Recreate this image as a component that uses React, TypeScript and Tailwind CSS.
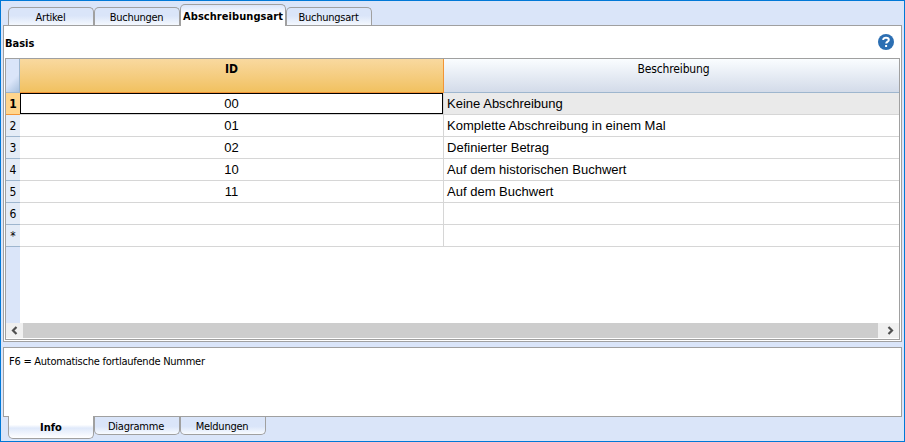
const tahoma = "font-['DejaVu_Sans_Condensed','DejaVu_Sans',sans-serif] [font-stretch:condensed]";
const arial = "font-['Liberation_Sans',sans-serif]";

const rows = [
  { n: '1', id: '00', text: 'Keine Abschreibung' },
  { n: '2', id: '01', text: 'Komplette Abschreibung in einem Mal' },
  { n: '3', id: '02', text: 'Definierter Betrag' },
  { n: '4', id: '10', text: 'Auf dem historischen Buchwert' },
  { n: '5', id: '11', text: 'Auf dem Buchwert' },
  { n: '6', id: '', text: '' },
  { n: '*', id: '', text: '' },
];

function TopTab({ label }: { label: string }) {
  return (
    <div className="flex h-[18px] w-[86px] items-center justify-center rounded-t-[5px] border border-b-0 border-[#a0a0a0] bg-linear-to-b from-[#dae5f9] from-45% to-[#f4f8fe] pt-px pr-px text-[11px] leading-none whitespace-nowrap">
      <span className="tracking-[-0.25px]">{label}</span>
    </div>
  );
}

function BottomTab({ label }: { label: string }) {
  return (
    <div className="flex h-[18px] w-[86px] items-center justify-center rounded-b-[5px] border border-t-0 border-[#a0a0a0] bg-linear-to-b from-[#dae5f9] from-55% to-[#f8fbff] pt-px pr-[2px] text-[11px] leading-none whitespace-nowrap">
      <span className="tracking-[-0.25px]">{label}</span>
    </div>
  );
}

export default function App() {
  return (
    <div className={`flex h-[442px] w-[905px] flex-col overflow-hidden border border-[#0078d7] bg-[#dae5f9] px-[2px] text-black ${tahoma}`}>
      <div className="flex h-[24px] shrink-0 items-end pl-[5px]">
        <TopTab label="Artikel" />
        <TopTab label="Buchungen" />
        <div className="z-10 -mb-px flex h-[22px] w-[106px] items-center justify-center rounded-t-[5px] border border-b-0 border-[#a0a0a0] bg-linear-to-b from-[#dae5f9] to-white to-45% pt-px text-[11px] leading-none font-bold whitespace-nowrap">
          <span className="tracking-[0.06px]">Abschreibungsart</span>
        </div>
        <TopTab label="Buchungsart" />
      </div>

      <div className="flex h-[317px] w-[899px] shrink-0 flex-col border border-[#a0a0a0] bg-white px-px">
        <div className="flex h-[32px] shrink-0 items-center justify-between pr-[6px]">
          <span className="pt-[3px] text-[11px] leading-none font-bold">Basis</span>
          <svg className="h-4 w-4" viewBox="0 0 16 16">
            <circle cx="8" cy="8" r="8" fill="#2c6fb3" />
            <path d="M5.2 6.1C5.2 4.4 6.3 3.8 8 3.8s2.8.8 2.8 2.1c0 1.7-2.6 1.8-2.6 3.7" fill="none" stroke="#fff" strokeWidth="2" />
            <rect x="7.1" y="11" width="2" height="2" fill="#fff" />
          </svg>
        </div>
        <div className="flex h-[282px] w-[895px] shrink-0 flex-col border border-[#a0a0a0] bg-white">
          <div className="flex h-[34px] shrink-0 text-[12px] leading-[20px]">
            <div className="w-[14px] border-r border-b border-[#9eb6ce] bg-linear-135 from-[#dae5f9] from-60% to-[#a9c1de]" />
            <div className="w-[424px] border-r border-b border-[#f29536] bg-linear-to-b from-[#f9d99f] to-[#f1c15f] text-center font-bold">ID</div>
            <div className="flex-1 border-b border-[#9eb6ce] bg-linear-to-b from-[#fafdff] to-[#d3dbe9] pl-[4px] text-center">
              <span className="tracking-[-0.15px]">Beschreibung</span>
            </div>
          </div>
          <div className="flex h-[230px] shrink-0">
            <div className="w-[14px] bg-[#dae5f9]">
              {rows.map((r, i) => (
                <div
                  key={r.n}
                  className={`flex h-[22px] items-center justify-center border-b text-[12px] leading-none ${
                    i === 0 ? 'border-[#f29536] bg-[#ffd58d] font-bold' : 'border-[#9eb6ce] bg-[#e4ecf7]'
                  }`}
                >
                  <span>{r.n}</span>
                </div>
              ))}
            </div>
            <div className="flex-1">
              {rows.map((r, i) => (
                <div key={r.n} className={`flex h-[22px] border-b border-[#d6d6d6] text-[13px] leading-[21px] ${arial} ${i === 0 ? 'bg-[#eaeaea]' : ''}`}>
                  <div className={`w-[423px] text-center ${i === 0 ? 'bg-white leading-[19px] outline-1 -outline-offset-1 outline-black pt-px' : ''}`}>{r.id}</div>
                  <div className="flex-1 border-l border-[#d6d6d6] pl-[3px] whitespace-nowrap">
                    <span className="tracking-[0.01px]">{r.text}</span>
                  </div>
                </div>
              ))}
            </div>
          </div>
          <div className="flex h-[15px] shrink-0 bg-[#f0f0f0]">
            <svg className="h-[15px] w-[17px]" viewBox="0 0 17 15">
              <path d="M10.5 4L7 7.5 10.5 11" fill="none" stroke="#505050" strokeWidth="2.2" />
            </svg>
            <div className="w-[855px] bg-[#cdcdcd]" />
            <svg className="h-[15px] w-[21px]" viewBox="0 0 21 15">
              <path d="M10.5 4L14 7.5 10.5 11" fill="none" stroke="#505050" strokeWidth="2.2" />
            </svg>
          </div>
        </div>
      </div>

      <div className="mt-[5px] h-[70px] w-[899px] shrink-0 border border-[#a0a0a0] bg-white pt-[8px] pl-[5px] text-[11px] leading-[12px]">
        <span className="tracking-[-0.25px]">F6 = Automatische fortlaufende Nummer</span>
      </div>
      <div className="flex shrink-0 items-start pl-[5px]">
        <div className="z-10 -mt-px flex h-[23px] w-[86px] items-center justify-center rounded-b-[5px] border border-t-0 border-[#a0a0a0] bg-linear-to-b from-white from-40% via-[#dfe9fa] via-55% to-white pt-px text-[11px] leading-none font-bold">
          Info
        </div>
        <BottomTab label="Diagramme" />
        <BottomTab label="Meldungen" />
      </div>
    </div>
  );
}
